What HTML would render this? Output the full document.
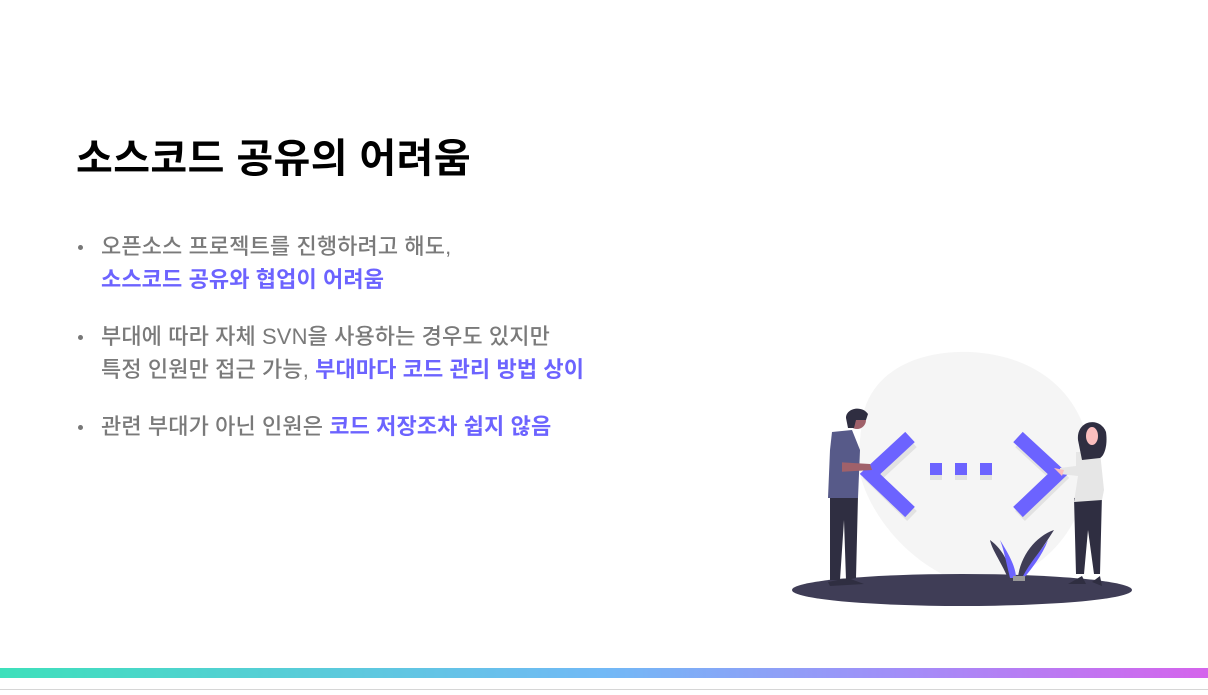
<!DOCTYPE html>
<html><head><meta charset="utf-8"><style>
body{margin:0;width:1208px;height:695px;background:#fff;position:relative;overflow:hidden;font-family:"Liberation Sans","Noto Sans CJK KR",sans-serif}
h1{position:absolute;left:76px;top:126px;margin:0;font-size:40px;font-weight:700;color:#000;letter-spacing:0.4px}
.b{position:absolute;left:101px;font-size:22px;line-height:33px;color:#7a7a7a;font-weight:500;letter-spacing:0.1px}
.b::before{content:"";position:absolute;left:-23px;top:15px;width:5px;height:5px;border-radius:50%;background:#777}
.p{color:#6c63ff;font-weight:700}
.bar{position:absolute;left:0;top:668px;width:1208px;height:10px;background:linear-gradient(90deg,#3ee0bb,#72b9f6 50%,#a38df8 75%,#d564ec)}
.ln{position:absolute;left:0;top:689px;width:1208px;height:1px;background:#d6d6d6}
</style></head><body>
<h1>소스코드 공유의 어려움</h1>
<div class="b" style="top:230px">오픈소스 프로젝트를 진행하려고 해도,<br><span class="p">소스코드 공유와 협업이 어려움</span></div>
<div class="b" style="top:320px">부대에 따라 자체 SVN을 사용하는 경우도 있지만<br>특정 인원만 접근 가능, <span class="p">부대마다 코드 관리 방법 상이</span></div>
<div class="b" style="top:410px">관련 부대가 아닌 인원은 <span class="p">코드 저장조차 쉽지 않음</span></div>
<svg style="position:absolute;left:0;top:0" width="1208" height="695">
<path d="M862 420 C870 370 920 350 970 352 C1030 355 1070 385 1085 430 C1100 490 1070 560 1000 582 L960 582 C900 560 860 500 858 460 Z" fill="#f5f5f5"/>
<ellipse cx="962" cy="590" rx="170" ry="16" fill="#3f3d56"/>
<g stroke="#e2e2e2" stroke-width="14" fill="none"><path d="M912 442 L873 478 L912 516"/><path d="M1020 442 L1059 478 L1020 516"/></g>
<g stroke="#6c63ff" stroke-width="14" fill="none"><path d="M910 437 L870 474 L910 512"/><path d="M1018 437 L1058 474 L1018 512"/></g>
<g fill="#e2e2e2"><rect x="930" y="468" width="12" height="12"/><rect x="955" y="468" width="12" height="12"/><rect x="980" y="468" width="12" height="12"/></g>
<g fill="#6c63ff"><rect x="930" y="463" width="12" height="12"/><rect x="955" y="463" width="12" height="12"/><rect x="980" y="463" width="12" height="12"/></g>
<!-- man -->
<path d="M830 496 L858 496 L856 578 L846 580 L844 520 L840 580 L830 580 Z" fill="#2f2e41"/>
<path d="M828 582 L848 578 L864 584 L830 586 Z" fill="#2f2e41"/>
<path d="M832 432 L852 430 L860 450 L858 498 L828 498 L830 450 Z" fill="#575a89"/>
<path d="M836 462 L870 464 L872 470 L838 472 Z" fill="#a0616a"/>
<path d="M834 456 L842 456 L842 472 L834 472Z" fill="#575a89"/>
<circle cx="857" cy="420" r="9" fill="#a0616a"/>
<path d="M846 418 C846 408 862 405 868 414 L866 420 L856 420 L854 428 L848 428 Z" fill="#2f2e41"/>
<!-- woman -->
<path d="M1074 498 L1102 494 L1100 574 L1094 574 L1088 530 L1084 574 L1076 574 Z" fill="#2f2e41"/>
<path d="M1068 584 L1082 576 L1086 584 Z M1092 582 L1100 576 L1102 586 Z" fill="#2f2e41"/>
<path d="M1076 452 L1100 452 L1104 490 L1102 500 L1074 502 L1078 476 L1060 474 L1060 468 L1076 466 Z" fill="#e6e6e6"/>
<path d="M1054 468 L1064 470 L1062 476 Z" fill="#fbbebe"/>
<path d="M1078 440 C1076 420 1100 416 1106 432 C1108 446 1104 456 1100 458 L1082 460 Z" fill="#2f2e41"/>
<ellipse cx="1092" cy="436" rx="6" ry="9" fill="#fbbebe"/>
<!-- plant -->
<path d="M1008 578 C1000 560 992 550 990 540 C1004 550 1010 566 1012 578Z" fill="#3f3d56"/>
<path d="M1010 578 C1006 562 1004 550 1000 540 C1010 556 1016 568 1016 578Z" fill="#6c63ff"/>
<path d="M1018 578 C1020 556 1036 536 1054 530 C1044 546 1032 562 1022 578Z" fill="#3f3d56"/>
<path d="M1022 578 C1030 562 1040 552 1048 540 C1042 556 1032 568 1024 578Z" fill="#6c63ff"/>
<rect x="1013" y="576" width="12" height="5" fill="#999"/>
</svg>
<div class="bar"></div><div class="ln"></div>
</body></html>
